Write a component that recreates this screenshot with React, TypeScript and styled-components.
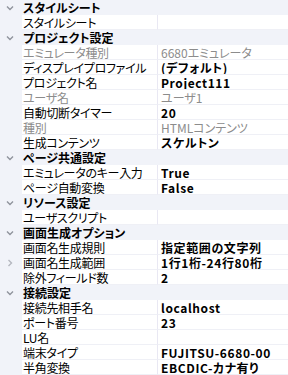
import styled, { createGlobalStyle } from "styled-components";

const GlobalStyle = createGlobalStyle`
  html, body {
    margin: 0;
    padding: 0;
    background: #ffffff;
  }
  body {
    font-family: "Noto Sans CJK JP", "Noto Sans", sans-serif;
    font-size: 12px;
    font-feature-settings: "palt";
  }
`;

type Item = {
  name: string;
  value?: string;
  muted?: boolean;
  expandable?: boolean;
};

type Group = {
  title: string;
  items: Item[];
};

const GROUPS: Group[] = [
  { title: "スタイルシート", items: [{ name: "スタイルシート" }] },
  {
    title: "プロジェクト設定",
    items: [
      { name: "エミュレータ種別", value: "6680エミュレータ", muted: true },
      { name: "ディスプレイプロファイル", value: "(デフォルト)" },
      { name: "プロジェクト名", value: "Project111" },
      { name: "ユーザ名", value: "ユーザ1", muted: true },
      { name: "自動切断タイマー", value: "20" },
      { name: "種別", value: "HTMLコンテンツ", muted: true },
      { name: "生成コンテンツ", value: "スケルトン" },
    ],
  },
  {
    title: "ページ共通設定",
    items: [
      { name: "エミュレータのキー入力", value: "True" },
      { name: "ページ自動変換", value: "False" },
    ],
  },
  { title: "リソース設定", items: [{ name: "ユーザスクリプト" }] },
  {
    title: "画面生成オプション",
    items: [
      { name: "画面名生成規則", value: "指定範囲の文字列" },
      { name: "画面名生成範囲", value: "1行1桁-24行80桁", expandable: true },
      { name: "除外フィールド数", value: "2" },
    ],
  },
  {
    title: "接続設定",
    items: [
      { name: "接続先相手名", value: "localhost" },
      { name: "ポート番号", value: "23" },
      { name: "LU名" },
      { name: "端末タイプ", value: "FUJITSU-6680-00" },
      { name: "半角変換", value: "EBCDIC-カナ有り" },
    ],
  },
];

const Grid = styled.div`
  width: 288px;
  display: flex;
  flex-direction: column;
  overflow: hidden;
`;

const Row = styled.div`
  display: grid;
  grid-template-columns: 22px 136px 1fr;
  height: 15px;
  line-height: 15px;
  white-space: nowrap;
`;

const CategoryRow = styled(Row)`
  background: #f1f3f9;
`;

const Gutter = styled.div`
  background: #f1f3f9;
  display: flex;
  align-items: center;
  justify-content: center;
  color: #9a9ca4;
`;

const CategoryTitle = styled.div`
  grid-column: 2 / 4;
  padding-left: 1px;
  font-weight: 700;
  color: #000;
`;

const NameCell = styled.div<{ $muted?: boolean }>`
  background: #fff;
  padding-left: 1px;
  letter-spacing: -0.3px;
  color: ${(p) => (p.$muted ? "#8c8c8c" : "#000")};
  border-right: 1px solid #e9e8f3;
  border-bottom: 1px solid #eff0f6;
  overflow: hidden;
`;

const ValueCell = styled.div<{ $muted?: boolean }>`
  background: #fff;
  padding-left: 3px;
  letter-spacing: ${(p) => (p.$muted ? "0" : "0.6px")};
  font-weight: ${(p) => (p.$muted ? 400 : 700)};
  color: ${(p) => (p.$muted ? "#8c8c8c" : "#000")};
  border-bottom: 1px solid #eff0f6;
  overflow: hidden;
`;

const Chevron = ({ open }: { open: boolean }) => (
  <svg width="8" height="8" viewBox="0 0 8 8" style={{ marginLeft: -2 }}>
    {open ? (
      <path d="M1 2.5 L4 5.5 L7 2.5" fill="none" stroke="#8f939c" strokeWidth="1.4" />
    ) : (
      <path d="M2.5 1 L5.5 4 L2.5 7" fill="none" stroke="#b4b7bf" strokeWidth="1.4" />
    )}
  </svg>
);

export default function App() {
  return (
    <>
      <GlobalStyle />
      <Grid>
        {GROUPS.map((g) => (
          <div key={g.title}>
            <CategoryRow>
              <Gutter>
                <Chevron open />
              </Gutter>
              <CategoryTitle>{g.title}</CategoryTitle>
            </CategoryRow>
            {g.items.map((it) => (
              <Row key={it.name}>
                <Gutter>{it.expandable && <Chevron open={false} />}</Gutter>
                <NameCell $muted={it.muted}>{it.name}</NameCell>
                <ValueCell $muted={it.muted}>{it.value ?? ""}</ValueCell>
              </Row>
            ))}
          </div>
        ))}
      </Grid>
    </>
  );
}
